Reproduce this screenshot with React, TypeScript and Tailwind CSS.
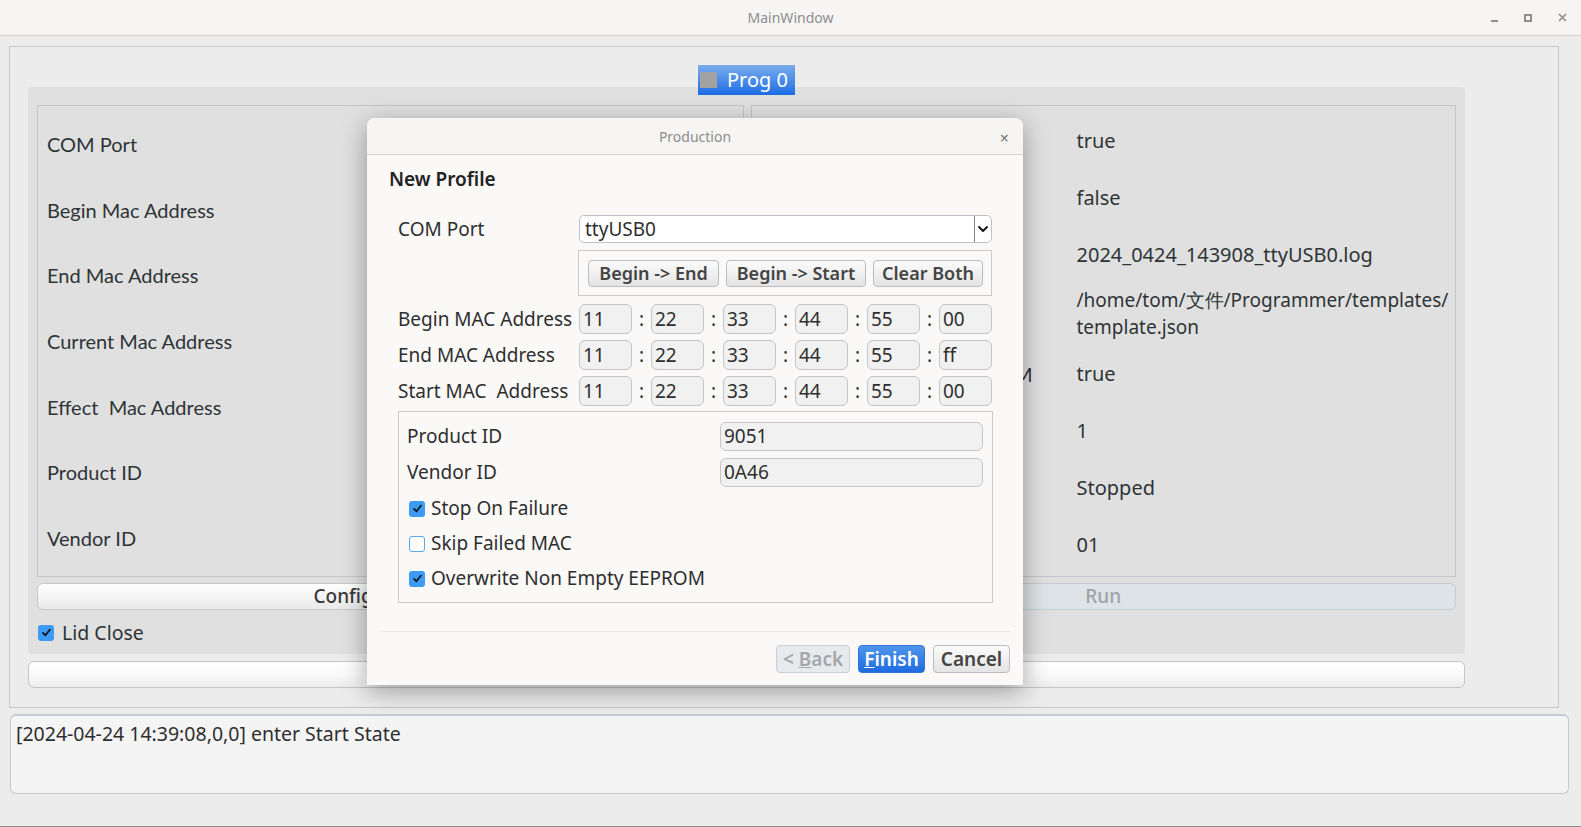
import { ChevronDown } from 'lucide-react';

const leftLabels = [
  'COM Port',
  'Begin Mac Address',
  'End Mac Address',
  'Current Mac Address',
  'Effect  Mac Address',
  'Product ID',
  'Vendor ID',
];

// labels of the right panel sit behind the dialog; only the tail of the EEPROM one shows
const rightRows = [
  { label: '', value: ['true'], h: 'h-[57px]', size: 'text-[20px]' },
  { label: '', value: ['false'], h: 'h-[57px]', size: 'text-[20px]' },
  { label: '', value: ['2024_0424_143908_ttyUSB0.log'], h: 'h-[57px]', size: 'text-[20px]' },
  { label: '', value: ['/home/tom/文件/Programmer/templates/', 'template.json'], h: 'h-[62px]', size: 'text-[19px]' },
  { label: 'Overwrite Non Empty EEPROM', value: ['true'], h: 'h-[57px]', size: 'text-[20px]' },
  { label: '', value: ['1'], h: 'h-[57px]', size: 'text-[20px]' },
  { label: '', value: ['Stopped'], h: 'h-[57px]', size: 'text-[20px]' },
  { label: '', value: ['01'], h: 'h-[57px]', size: 'text-[20px]' },
];

const macRows = [
  { label: 'Begin MAC Address', parts: ['11', '22', '33', '44', '55', '00'] },
  { label: 'End MAC Address', parts: ['11', '22', '33', '44', '55', 'ff'] },
  { label: 'Start MAC  Address', parts: ['11', '22', '33', '44', '55', '00'] },
];

function CheckBox({ checked }: { checked: boolean }) {
  if (checked) {
    return (
      <span className="flex h-[16px] w-[16px] shrink-0 items-center justify-center rounded-[3px] bg-[#3d9bf3]">
        <svg width="11" height="11" viewBox="0 0 12 12">
          <path d="M2.2 6.4 L4.9 9.1 L9.8 2.8" fill="none" stroke="#111" strokeWidth="1.8" strokeLinecap="round" strokeLinejoin="round" />
        </svg>
      </span>
    );
  }
  return <span className="h-[16px] w-[16px] shrink-0 rounded-[3px] border border-[#5aa6ee] bg-white" />;
}

function QtButton({ children, className = '' }: { children: React.ReactNode; className?: string }) {
  return (
    <div
      className={`flex h-[27px] items-center justify-center rounded-[4px] border border-[#b9bdc1] bg-gradient-to-b from-[#fbfbfb] to-[#e4e4e4] text-[18px] font-semibold text-[#444] ${className}`}
    >
      {children}
    </div>
  );
}

function ProductionDialog() {
  return (
    <div className="absolute left-[367px] top-[118px] flex h-[567px] w-[656px] flex-col rounded-t-[8px] bg-[#faf9f8] text-[#2e2e2e] shadow-[0_6px_26px_rgba(0,0,0,0.35)]">
      <div className="relative flex h-[37px] shrink-0 items-center justify-center rounded-t-[8px] border-b border-[#d9d5d0] bg-[#f6f5f4] text-[14px] text-[#8c8c8c]">
        Production
        <span className="absolute right-[14px] top-[8px] text-[16px] text-[#777]">×</span>
      </div>

      <div className="flex flex-1 flex-col">
        <div className="ml-[22px] mt-[12px] h-[24px] text-[19px] font-semibold leading-[24px] text-[#222]">New Profile</div>

        <div className="ml-[31px] mr-[31px] flex flex-col text-[19px]">
          <div className="mt-[24px] flex h-[28px] items-center">
            <span className="w-[181px]">COM Port</span>
            <div className="flex h-[28px] w-[413px] items-center rounded-[5px] border border-[#bfc3c7] bg-white">
              <span className="flex-1 pl-[5px]">ttyUSB0</span>
              <span className="flex h-full w-[17px] items-center justify-center border-l border-[#8a8a8a]">
                <ChevronDown size={18} strokeWidth={2.8} color="#111" />
              </span>
            </div>
          </div>

          <div className="ml-[180px] mt-[7px] flex h-[46px] w-[414px] items-center gap-[7px] border border-[#cbcbcb] pl-[9px] pt-[1px]">
            <QtButton className="w-[131px]">Begin -&gt; End</QtButton>
            <QtButton className="w-[140px]">Begin -&gt; Start</QtButton>
            <QtButton className="w-[110px]">Clear Both</QtButton>
          </div>

          <div className="mt-[8px] flex flex-col gap-[6px]">
            {macRows.map((row) => (
              <div key={row.label} className="flex h-[30px] items-center">
                <span className="w-[181px] whitespace-pre">{row.label}</span>
                <div className="flex items-center">
                  {row.parts.map((part, i) => (
                    <div key={i} className="flex items-center">
                      {i > 0 && <span className="w-[19px] text-center">:</span>}
                      <div className="flex h-[30px] w-[53px] items-center rounded-[6px] border border-[#c2c6ca] bg-[#f1f1f1] pl-[3px]">
                        {part}
                      </div>
                    </div>
                  ))}
                </div>
              </div>
            ))}
          </div>

          <div className="mt-[5px] flex h-[192px] w-[595px] flex-col border border-[#cbcbcb] pl-[8px] pr-[9px] pt-[10px]">
            <div className="flex h-[29px] items-center justify-between">
              <span>Product ID</span>
              <div className="flex h-[29px] w-[263px] items-center rounded-[6px] border border-[#c2c6ca] bg-[#f1f1f1] pl-[3px]">9051</div>
            </div>
            <div className="mt-[7px] flex h-[29px] items-center justify-between">
              <span>Vendor ID</span>
              <div className="flex h-[29px] w-[263px] items-center rounded-[6px] border border-[#c2c6ca] bg-[#f1f1f1] pl-[3px]">0A46</div>
            </div>
            <div className="mt-[4px] flex flex-col pl-[2px]">
              {[
                { label: 'Stop On Failure', checked: true },
                { label: 'Skip Failed MAC', checked: false },
                { label: 'Overwrite Non Empty EEPROM', checked: true },
              ].map((c) => (
                <div key={c.label} className="flex h-[35px] items-center gap-[6px]">
                  <CheckBox checked={c.checked} />
                  <span>{c.label}</span>
                </div>
              ))}
            </div>
          </div>
        </div>

        <div className="mx-[12px] mt-[28px] h-px bg-[#ecebe9]" />

        <div className="mr-[13px] mt-[13px] flex justify-end gap-[8px]">
          <div className="flex h-[28px] w-[74px] items-center justify-center rounded-[4px] border border-[#c9cfd4] bg-[#e6eaed] text-[19px] font-semibold text-[#a3a7aa]">
            &lt; <span className="ml-[5px] underline">B</span>ack
          </div>
          <div className="flex h-[28px] w-[67px] items-center justify-center rounded-[4px] border border-[#2f74d6] bg-gradient-to-b from-[#4e95ea] to-[#1d6be0] text-[19px] font-semibold text-white">
            <span className="underline">F</span>inish
          </div>
          <QtButton className="h-[28px] w-[77px] text-[19px]">Cancel</QtButton>
        </div>
      </div>
    </div>
  );
}

export default function App() {
  return (
    <div className="relative h-[827px] w-[1581px] overflow-hidden border-b border-[#8e8e8e] bg-[#ececec] font-['Noto_Sans',sans-serif] text-[#2e3436]">
      {/* window title bar */}
      <div className="grid h-[36px] grid-cols-[1fr_auto_1fr] items-center border-b border-[#d6d2cc] bg-[#f6f5f4]">
        <div />
        <span className="text-[14px] text-[#8e8e8e]">MainWindow</span>
        <div className="flex items-center justify-end gap-[26px] pr-[14px]">
          <span className="mt-[6px] h-[2px] w-[7px] bg-[#8e8e8e]" />
          <span className="h-[8px] w-[8px] border-2 border-[#8e8e8e]" />
          <svg width="9" height="9" viewBox="0 0 9 9">
            <path d="M1 1 L8 8 M8 1 L1 8" stroke="#8e8e8e" strokeWidth="1.6" />
          </svg>
        </div>
      </div>

      {/* central frame */}
      <div className="ml-[9px] mt-[10px] h-[662px] w-[1550px] border border-[#c6c6c6] pl-[18px] pt-[18px]">
        <div className="relative z-10 flex w-[1437px] justify-center">
          <div className="flex h-[30px] w-[97px] items-center bg-gradient-to-b from-[#78acec] to-[#1a6ce4] pl-[2px]">
            <span className="h-[16px] w-[17px] bg-[#a2a2a2]" />
            <span className="ml-[10px] text-[20px] text-white">Prog 0</span>
          </div>
        </div>

        <div className="-mt-[8px] h-[567px] w-[1437px] rounded-[4px] bg-[#e0e0e0] px-[9px] pt-[18px] font-['Lato',sans-serif]">
          <div className="flex h-[472px] gap-[7px]">
            <div className="w-[707px] border border-[#c6c6c6] pl-[9px] pt-[5px]">
              {leftLabels.map((label) => (
                <div key={label} className="flex h-[65.7px] items-center text-[20px]">
                  <span className="whitespace-pre">{label}</span>
                </div>
              ))}
            </div>
            <div className="w-[706px] border border-[#c6c6c6] pl-[1px] pt-[6px]">
              {rightRows.map((row, i) => (
                <div key={i} className={`flex items-center ${row.h}`}>
                  <span className="w-[324px] text-[20px]">{row.label}</span>
                  <div className={`flex flex-col font-['Noto_Sans',sans-serif] leading-[27px] ${row.size}`}>
                    {row.value.map((v) => (
                      <span key={v} className="whitespace-nowrap">{v}</span>
                    ))}
                  </div>
                </div>
              ))}
            </div>
          </div>

          <div className="mt-[6px] flex h-[27px] gap-[7px] font-['Noto_Sans',sans-serif] text-[19px]">
            <div className="flex w-[707px] items-center justify-center rounded-[6px] border border-[#c3c7cb] bg-gradient-to-b from-white to-[#e9e9e9] font-medium text-[#3a3a3a]">
              Configure Profile
            </div>
            <div className="flex w-[706px] items-center justify-center rounded-[6px] border border-[#c6ccd1] bg-[#dde3e6] font-medium text-[#9ea3a7]">
              Run
            </div>
          </div>

          <div className="mt-[8px] flex items-center gap-[8px] pl-[1px] font-['Noto_Sans',sans-serif] text-[19.5px]">
            <CheckBox checked />
            <span>Lid Close</span>
          </div>
        </div>

        <div className="mt-[7px] h-[27px] w-[1437px] rounded-[6px] border border-[#c2c6ca] bg-gradient-to-b from-white via-[#fafafa] to-[#ececec]" />
      </div>

      {/* log */}
      <div className="ml-[10px] mt-[6px] h-[80px] w-[1559px] rounded-[6px] border border-[#c4c8cc] border-t-2 border-t-[#c8ccd1] bg-[#f4f4f4] pl-[5px] pt-[3px] text-[19.5px] text-[#2e2e2e]">
        [2024-04-24 14:39:08,0,0] enter Start State
      </div>

      <ProductionDialog />
    </div>
  );
}
